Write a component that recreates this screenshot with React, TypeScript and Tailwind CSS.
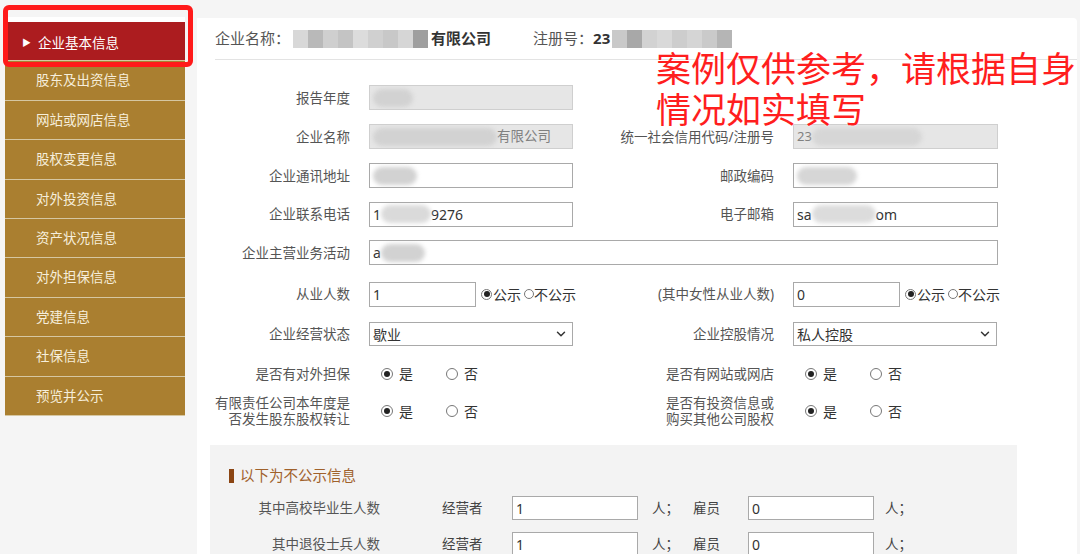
import React from 'react';
import { ChevronDown } from 'lucide-react';

const font = 'font-["Noto_Sans","Noto_Sans_CJK_SC",sans-serif]';

const menu = [
  '企业基本信息',
  '股东及出资信息',
  '网站或网店信息',
  '股权变更信息',
  '对外投资信息',
  '资产状况信息',
  '对外担保信息',
  '党建信息',
  '社保信息',
  '预览并公示',
];

const Blur: React.FC<{ className?: string }> = ({ className = '' }) => (
  <span className={`inline-block h-[18px] rounded-full bg-[#d2d2d2] blur-[2px] ${className}`} />
);

const Mosaic: React.FC<{ tones: string[]; className?: string }> = ({ tones, className = '' }) => (
  <span className={`inline-flex h-[18px] blur-[0.6px] ${className}`}>
    {tones.map((t, i) => (
      <span key={i} className="h-full w-[15px]" style={{ background: t }} />
    ))}
  </span>
);

const Field: React.FC<{ w: string; readOnly?: boolean; children?: React.ReactNode }> = ({
  w,
  readOnly,
  children,
}) => (
  <div
    className={`${w} shrink-0 h-[25px] flex items-center px-[3px] text-[14px] border ${
      readOnly ? 'bg-[#e6e6e6] border-[#cfcfcf] text-[#808080]' : 'bg-white border-[#a9a9a9] text-[#333]'
    } overflow-hidden whitespace-nowrap`}
  >
    {children}
  </div>
);

const Select: React.FC<{ value: string }> = ({ value }) => (
  <div className="w-[204px] shrink-0 h-[24px] flex items-center justify-between pl-[3px] pr-[4px] bg-white border border-[#a9a9a9] text-[14px] text-[#333]">
    <span>{value}</span>
    <ChevronDown size={14} strokeWidth={2.5} className="text-[#333]" />
  </div>
);

const Dot: React.FC<{ on?: boolean; size?: string }> = ({ on, size = 'w-[12px] h-[12px]' }) => (
  <span className={`${size} shrink-0 rounded-full border border-[#777] bg-white flex items-center justify-center`}>
    {on && <span className="w-[6px] h-[6px] rounded-full bg-[#222]" />}
  </span>
);

const Publish: React.FC = () => (
  <div className="ml-[5px] flex items-center text-[14px] text-[#333] whitespace-nowrap">
    <Dot on size="w-[11px] h-[11px]" />
    <span className="ml-[1px]">公示</span>
    <span className="ml-[3px]">
      <Dot size="w-[10px] h-[10px]" />
    </span>
    <span>不公示</span>
  </div>
);

const YesNo: React.FC = () => (
  <div className="w-[204px] shrink-0 flex items-center pl-[12px] text-[14px] text-[#333]">
    <Dot on />
    <span className="ml-[6px]">是</span>
    <span className="ml-[33px]">
      <Dot />
    </span>
    <span className="ml-[6px]">否</span>
  </div>
);

const Label: React.FC<{ w: string; children: React.ReactNode }> = ({ w, children }) => (
  <div className={`${w} shrink-0 text-right text-[13.5px] leading-[16px] text-[#555] mr-[19px] whitespace-nowrap`}>
    {children}
  </div>
);

export default function App() {
  return (
    <div className={`relative w-[1080px] h-[554px] overflow-hidden bg-[#f5f5f5] flex items-start ${font}`}>
      {/* sidebar */}
      <aside className="ml-[5px] mt-[17px] w-[180px] shrink-0 flex flex-col">
        <div className="h-[5px] bg-white" />
        {menu.map((m, i) => (
          <div
            key={m}
            className={`h-[39.4px] flex items-center text-[13.5px] border-b border-[#d6c7a2] ${
              i === 0 ? 'bg-[#ac1c1f] text-white pl-[17px] pt-[3px]' : 'bg-[#aa7f30] text-[#f6eedb] pl-[31px]'
            }`}
          >
            {i === 0 && <span className="text-[9px] mr-[7px]">▶</span>}
            {m}
          </div>
        ))}
      </aside>

      {/* main panel */}
      <main className="ml-[12px] mt-[18px] w-[880px] h-[536px] shrink-0 overflow-hidden bg-white rounded-tr-[4px] flex flex-col">
        <div className="ml-[18px] h-[42px] shrink-0 border-b border-[#e3e3e3] flex items-center text-[15px] text-[#555] whitespace-nowrap">
          <span>企业名称：</span>
          <Mosaic
            tones={['#d8d8d8', '#b9b9b9', '#cfcfcf', '#c4c4c4', '#dcdcdc', '#d0d0d0', '#c8c8c8', '#d6d6d6', '#9f9f9f']}
            className="ml-[3px] w-[138px]"
          />
          <span className="font-bold text-[#333]">有限公司</span>
          <span className="ml-[42px]">注册号：</span>
          <span className="font-bold text-[#333]">23</span>
          <Mosaic
            tones={['#c9c9c9', '#a8a8a8', '#d2d2d2', '#d9d9d9', '#cdcdcd', '#d5d5d5', '#cacaca', '#b5b5b5']}
            className="ml-[2px] w-[123px]"
          />
        </div>

        <div className="pt-[18px] shrink-0 flex flex-col">
          <div className="h-[39px] flex items-center">
            <Label w="w-[153px]">报告年度</Label>
            <Field w="w-[204px]" readOnly>
              <Blur className="w-[40px] bg-[#c9c9c9]" />
            </Field>
          </div>
          <div className="h-[39px] flex items-center">
            <Label w="w-[153px]">企业名称</Label>
            <Field w="w-[204px]" readOnly>
              <Blur className="w-[124px] bg-[#cbcbcb]" />
              <span className="text-[13.5px]">有限公司</span>
            </Field>
            <Label w="w-[201px]">统一社会信用代码/注册号</Label>
            <Field w="w-[205px]" readOnly>
              <span className="text-[13px]">23</span>
              <Blur className="w-[110px] bg-[#d6d6d6]" />
            </Field>
          </div>
          <div className="h-[39px] flex items-center">
            <Label w="w-[153px]">企业通讯地址</Label>
            <Field w="w-[204px]">
              <Blur className="w-[44px] bg-[#c6c6c6]" />
            </Field>
            <Label w="w-[201px]">邮政编码</Label>
            <Field w="w-[205px]">
              <Blur className="w-[60px] bg-[#d6d6d6]" />
            </Field>
          </div>
          <div className="h-[38.5px] flex items-center">
            <Label w="w-[153px]">企业联系电话</Label>
            <Field w="w-[204px]">
              <span>1</span>
              <Blur className="w-[50px] bg-[#dadada]" />
              <span>9276</span>
            </Field>
            <Label w="w-[201px]">电子邮箱</Label>
            <Field w="w-[205px]">
              <span>sa</span>
              <Blur className="w-[64px] bg-[#dcdcdc]" />
              <span>om</span>
            </Field>
          </div>
          <div className="h-[38.5px] flex items-center">
            <Label w="w-[153px]">企业主营业务活动</Label>
            <Field w="w-[629px]">
              <span>a</span>
              <Blur className="w-[44px] bg-[#cfcfcf]" />
            </Field>
          </div>

          <div className="mt-[2px] h-[40px] flex items-center">
            <Label w="w-[153px]">从业人数</Label>
            <Field w="w-[107px]">1</Field>
            <div className="w-[97px] shrink-0">
              <Publish />
            </div>
            <Label w="w-[201px]">(其中女性从业人数)</Label>
            <Field w="w-[107px]">0</Field>
            <Publish />
          </div>
          <div className="h-[40px] flex items-center">
            <Label w="w-[153px]">企业经营状态</Label>
            <Select value="歇业" />
            <Label w="w-[201px]">企业控股情况</Label>
            <Select value="私人控股" />
          </div>
          <div className="h-[39px] flex items-center">
            <Label w="w-[153px]">是否有对外担保</Label>
            <YesNo />
            <Label w="w-[201px]">是否有网站或网店</Label>
            <YesNo />
          </div>
          <div className="h-[36px] flex items-center">
            <Label w="w-[153px]">
              有限责任公司本年度是
              <br />
              否发生股东股权转让
            </Label>
            <YesNo />
            <Label w="w-[201px]">
              <span className="inline-block text-left">
                是否有投资信息或
                <br />
                购买其他公司股权
              </span>
            </Label>
            <YesNo />
          </div>
        </div>

        {/* non-public section */}
        <section className="ml-[13px] mt-[16px] w-[807px] flex-1 shrink-0 bg-[#f3f3f3] pt-[22px]">
          <div className="pl-[19px] h-[18px] flex items-center text-[14.5px] text-[#a0612b]">
            <span className="w-[5px] h-[14px] bg-[#8b4513] mr-[6px]" />
            以下为不公示信息
          </div>
          <div className="mt-[5px] flex flex-col">
            {['其中高校毕业生人数', '其中退役士兵人数'].map((l) => (
              <div key={l} className="h-[36px] shrink-0 flex items-center text-[13.5px] text-[#555]">
                <div className="w-[170px] text-right">{l}</div>
                <div className="ml-[62px] w-[70px] text-[#444]">经营者</div>
                <div className="w-[126px] h-[24px] bg-white border border-[#a9a9a9] px-[3px] flex items-center text-[14px] text-[#333]">
                  1
                </div>
                <div className="ml-[14px] w-[41px] text-[#444]">人；</div>
                <div className="w-[55px] text-[#444]">雇员</div>
                <div className="w-[126px] h-[24px] bg-white border border-[#a9a9a9] px-[3px] flex items-center text-[14px] text-[#333]">
                  0
                </div>
                <div className="ml-[11px] text-[#444]">人；</div>
              </div>
            ))}
          </div>
        </section>
      </main>

      {/* annotation overlay */}
      <div className="absolute left-[3px] top-[5px] w-[190px] h-[62px] border-[5px] border-[#ff1a1a] rounded-[6px] pointer-events-none" />
      <div className="absolute left-[656px] top-[48px] text-[35px] leading-[41px] text-[#ff1e1e] whitespace-nowrap [text-shadow:0_0_2px_#fff]">
        案例仅供参考，请根据自身
        <br />
        情况如实填写
      </div>
    </div>
  );
}
